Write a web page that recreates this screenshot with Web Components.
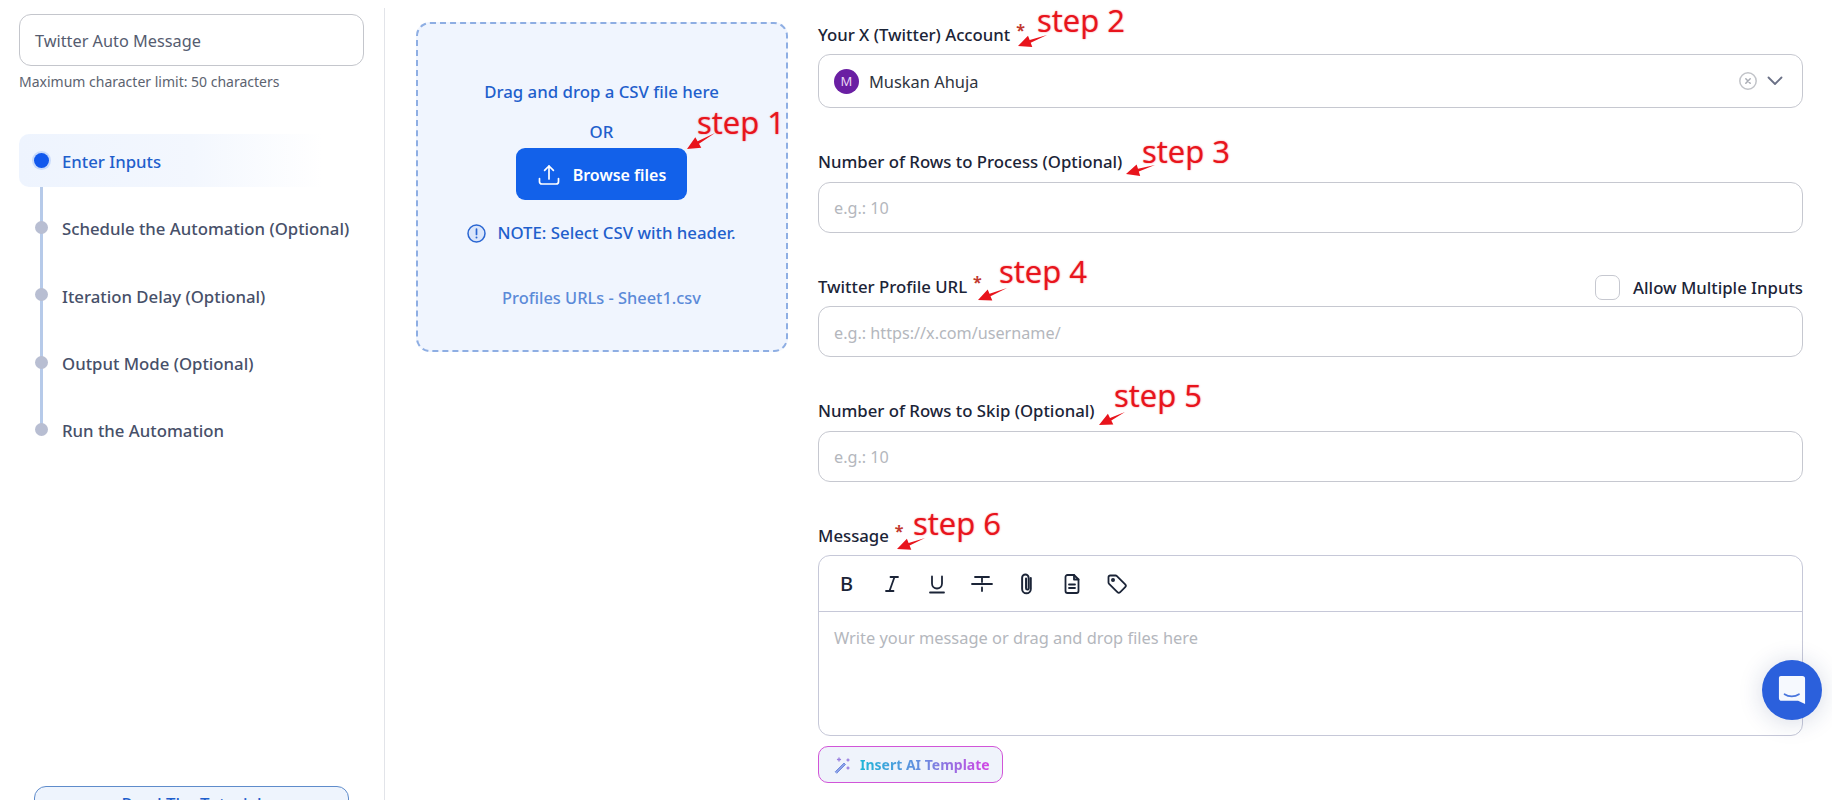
<!DOCTYPE html>
<html lang="en"><head><meta charset="utf-8"><title>Twitter Auto Message</title>
<style>
html,body{margin:0;height:100%;overflow:hidden;background:#fff;font-family:"Noto Sans",sans-serif;font-size:16px;color:#1b2437}
</style></head>
<body>
<app-shell>
  <side-nav slot="side">
    <step-item active>Enter Inputs</step-item>
    <step-item>Schedule the Automation (Optional)</step-item>
    <step-item>Iteration Delay (Optional)</step-item>
    <step-item>Output Mode (Optional)</step-item>
    <step-item>Run the Automation</step-item>
  </side-nav>
  <drop-zone slot="drop"></drop-zone>
  <form-field slot="form" label="Your X (Twitter) Account" required><account-select></account-select></form-field>
  <form-field slot="form" label="Number of Rows to Process (Optional)"><text-box>e.g.: 10</text-box></form-field>
  <form-field slot="form" label="Twitter Profile URL" required><multi-check slot="extra"></multi-check><text-box>e.g.: https://x.com/username/</text-box></form-field>
  <form-field slot="form" label="Number of Rows to Skip (Optional)"><text-box>e.g.: 10</text-box></form-field>
  <form-field slot="form" label="Message" required><rich-editor></rich-editor></form-field>
  <step-note slot="over" n="1" x="697" y="102" ax1="715" ay1="133" ax2="687" ay2="149"></step-note>
  <step-note slot="over" n="2" x="1037" y="0" ax1="1047" ay1="35" ax2="1018" ay2="46"></step-note>
  <step-note slot="over" n="3" x="1142" y="131" ax1="1155" ay1="165" ax2="1126" ay2="174"></step-note>
  <step-note slot="over" n="4" x="999" y="251" ax1="1007" ay1="288" ax2="978" ay2="300"></step-note>
  <step-note slot="over" n="5" x="1114" y="375" ax1="1125" ay1="412" ax2="1099" ay2="425"></step-note>
  <step-note slot="over" n="6" x="913" y="503" ax1="925" ay1="538" ax2="897" ay2="549"></step-note>
  <chat-bubble slot="over"></chat-bubble>
</app-shell>
<script>
function def(name,html,init){
  customElements.define(name,class extends HTMLElement{
    connectedCallback(){
      if(this.shadowRoot)return;
      const r=this.attachShadow({mode:'open'});
      r.innerHTML=typeof html==='function'?html(this):html;
      if(init)init(this,r);
    }
  });
}
const esc=s=>String(s).replace(/&/g,'&amp;').replace(/</g,'&lt;');

def('app-shell',`<style>
:host{display:flex;position:relative;width:1832px;height:800px;overflow:hidden;box-sizing:border-box}
.side{flex:0 0 385px;box-sizing:border-box;margin-top:8px;border-right:1px solid #e2e4e9;height:792px;overflow:hidden}
.drop{flex:0 0 372px;margin:22px 0 0 30.5px}
.form{flex:0 0 985px;margin:23px 0 0 30.5px;display:flex;flex-direction:column;gap:42.5px}
</style>
<div class="side"><slot name="side"></slot></div>
<div class="drop"><slot name="drop"></slot></div>
<div class="form"><slot name="form"></slot></div>
<slot name="over"></slot>`);

def('side-nav',`<style>
:host{display:flex;flex-direction:column;padding:6px 20px 0 19px;box-sizing:border-box;height:822px}
.title{box-sizing:border-box;height:52px;border:1px solid #c4c6cc;border-radius:12px;padding:1px 15px 0;display:flex;align-items:center;color:#555c70;font-size:16.3px}
.help{font-size:14px;color:#5c6370;line-height:20px;margin-top:6px}
nav{margin-top:35px;display:block}
.tut{box-sizing:border-box;margin:auto 0 0 15px;width:315px;height:44px;flex:none;border:1.5px solid #5f8ccb;border-radius:12px;background:#eef4fd;color:#1f5fcc;font-weight:500;font-size:16.8px;text-align:center;line-height:33px}
</style>
<div class="title">Twitter Auto Message</div>
<div class="help">Maximum character limit: 50 characters</div>
<nav><slot></slot></nav>
<div class="tut">Read The Tutorial</div>`);

def('step-item',el=>`<style>
:host{display:flex;align-items:center;position:relative;height:67.3px}
.row{position:relative;z-index:1;display:flex;align-items:center;height:53px;width:100%;border-radius:10px 0 0 10px;color:#475069;font-weight:500;font-size:16.75px;padding-left:43px;box-sizing:border-box;white-space:nowrap}
.dot{position:absolute;left:16px;top:50%;width:13px;height:13px;margin-top:-7px;border-radius:50%;background:#b8bed2;z-index:2}
.line{position:absolute;left:21px;width:3px;top:-50%;height:100%;background:#b6cae9;z-index:0}
.tx{position:relative;top:1px}
:host([active]) .row{background:linear-gradient(90deg,#eef4fe 0%,#f3f7fe 50%,#fff 88%);color:#1f5fcc}
:host([active]) .dot{left:15px;width:15px;height:15px;margin-top:-8px;background:#1259ed;box-shadow:0 0 0 2px #c9dbfb}
:host([active]) .line{display:none}
</style>
<span class="line"></span><div class="row"><span class="dot"></span><span class="tx"><slot></slot></span></div>`);

def('drop-zone',`<style>
:host{display:flex;flex-direction:column;align-items:center;box-sizing:border-box;height:330px;border:2px dashed #8eaee3;border-radius:14px;background:#f0f5fe;color:#1f5fcc;font-weight:500;font-size:16.8px;padding-top:56px}
.t{line-height:24px}
.or{margin-top:16px;line-height:24px}
.btn{margin-top:4px;width:171px;height:52px;box-sizing:border-box;border-radius:9px;background:#1261ea;color:#fff;display:flex;align-items:center;justify-content:center;gap:12px;font-weight:600;font-size:16px;padding-top:1px}
.note{margin-top:21px;display:flex;align-items:center;gap:11px;line-height:24px}
.file{margin-top:41px;line-height:24px;color:#5b8ad8;font-size:16.4px}
svg{display:block}
</style>
<div class="t">Drag and drop a CSV file here</div>
<div class="or">OR</div>
<div class="btn"><svg width="24" height="24" viewBox="0 0 24 24" fill="none" stroke="#fff" stroke-width="1.7" stroke-linecap="round" stroke-linejoin="round"><path d="M2.5 15.5v3.2a2.3 2.3 0 0 0 2.3 2.3h14.4a2.3 2.3 0 0 0 2.3-2.3v-3.2"/><path d="M12 16V3.2"/><path d="M7.6 7.4 12 3l4.400 4.400"/></svg><span>Browse files</span></div>
<div class="note"><svg width="19" height="19" viewBox="0 0 19 19"><circle cx="9.500" cy="9.500" r="8.500" fill="#dbe6fb" stroke="#2a66d2" stroke-width="1.500"/><path d="M9.500 5v5.500" stroke="#2a66d2" stroke-width="1.700" stroke-linecap="round"/><circle cx="9.500" cy="13.500" r="1" fill="#2a66d2"/></svg><span>NOTE: Select CSV with header.</span></div>
<div class="file">Profiles URLs - Sheet1.csv</div>`);

def('form-field',el=>`<style>
:host{display:block}
.head{display:flex;justify-content:space-between;align-items:center;height:24px;margin-bottom:7px;font-weight:500;font-size:16.75px;color:#1b2437;white-space:nowrap}
.star{color:#c2392f;font-size:16px;font-weight:700;margin-left:6px;position:relative;top:-5px}
.lab{position:relative;top:-1px}
</style>
<div class="head"><span class="lab">${esc(el.getAttribute('label'))}${el.hasAttribute('required')?'<span class="star">*</span>':''}</span><slot name="extra"></slot></div>
<slot></slot>`);

def('text-box',`<style>
:host{display:flex;align-items:center;box-sizing:border-box;height:51px;border:1px solid #c6c8d0;border-radius:12px;padding:2px 15px 0;color:#b4b7bd;font-size:16.2px}
</style><slot></slot>`);

def('multi-check',`<style>
:host{display:flex;align-items:center;gap:13px;font-weight:500;color:#1b2437;font-size:16.75px}
.c{width:25px;height:25px;box-sizing:border-box;border:1.500px solid #c6c8d0;border-radius:7px;background:#fff}
</style><span class="c"></span><span>Allow Multiple Inputs</span>`);

def('account-select',`<style>
:host{display:flex;align-items:center;box-sizing:border-box;height:54px;border:1px solid #c6c8d0;border-radius:12px;padding:0 18px 0 15px;color:#2e3440;font-size:16.4px}
.av{width:25px;height:25px;border-radius:50%;background:#6a1fa3;color:#e9d8f5;font-size:13px;display:flex;align-items:center;justify-content:center;margin-right:10px}
.name{flex:1}
svg{display:block}
</style>
<span class="av">M</span><span class="name">Muskan Ahuja</span>
<svg width="20" height="20" viewBox="0 0 20 20" fill="none" stroke="#c2c4c9" stroke-width="1.500" stroke-linecap="round"><circle cx="10" cy="10" r="8.200"/><path d="M7.800 7.800l4.400 4.400M12.200 7.800l-4.400 4.400" stroke="#a9acb4"/></svg>
<svg style="margin-left:8px" width="18" height="18" viewBox="0 0 18 18" fill="none" stroke="#6a7086" stroke-width="1.800" stroke-linecap="round" stroke-linejoin="round"><path d="M2.500 5.500 9 12l6.500-6.500"/></svg>`);

const ic=(inner,w=24)=>`<svg width="${w}" height="${w}" viewBox="0 0 24 24" fill="none" stroke="#1b2437" stroke-width="1.800" stroke-linecap="round" stroke-linejoin="round">${inner}</svg>`;
def('rich-editor',`<style>
:host{display:block}
.box{box-sizing:border-box;height:181px;border:1px solid #c6c8d8;border-radius:12px;display:flex;flex-direction:column}
.bar{height:56px;flex:none;border-bottom:1px solid #c6c8d8;display:flex;align-items:center;padding:0 4px 0 5px;box-sizing:border-box}
.b{width:45px;height:45px;display:flex;align-items:center;justify-content:center}
.bold{font-weight:500;font-size:20px;color:#1b2437;font-family:"Noto Sans",sans-serif}
svg{display:block}
.ph{padding:14px 15px 0;color:#b4b7bd;font-size:16.4px;line-height:24px}
.ai{margin-top:10px;width:185px;height:37px;box-sizing:border-box;border:1.500px solid #d155d8;border-radius:10px;background:#eff3fb;display:flex;align-items:center;padding-left:14px;gap:9px;font-size:14px;font-weight:700}
.ai span{background:linear-gradient(90deg,#1fb6d8 0%,#6d8ae0 50%,#d444e4 100%);-webkit-background-clip:text;background-clip:text;color:transparent}
</style>
<div class="box"><div class="bar">
<span class="b bold">B</span>
<span class="b">${ic('<path d="M10.500 5H18M6 19h7.500M14.500 5 9.500 19"/>')}</span>
<span class="b">${ic('<path d="M7 4.500v7a5 5 0 0 0 10 0v-7"/><path d="M5 20.500h14"/>')}</span>
<span class="b">${ic('<path d="M5 5h14M12 5v5M12 15.500V19M2 12h20"/>')}</span>
<span class="b">${ic('<path d="M15.500 6.500v10a4 4 0 0 1-8 0V6.200a3 3 0 0 1 6 0V16a1.200 1.200 0 0 1-2.400 0V7"/>',26)}</span>
<span class="b">${ic('<path d="M14 3H7.500A2 2 0 0 0 5.500 5v14a2 2 0 0 0 2 2h9a2 2 0 0 0 2-2V7.500z"/><path d="M14 3v4.500h4.500M9 12.500h6M9 16h6"/>')}</span>
<span class="b">${ic('<path d="M3.500 5.200v5.300c0 .5.200 1 .6 1.400l8.300 8.300a2 2 0 0 0 2.800 0l5-5a2 2 0 0 0 0-2.800L11.900 4.100a2 2 0 0 0-1.400-.6H5.200a1.700 1.700 0 0 0-1.700 1.700z"/><circle cx="8" cy="8" r="1.100"/>')}</span>
</div><div class="ph">Write your message or drag and drop files here</div></div>
<div class="ai"><svg width="18" height="18" viewBox="0 0 18 18" fill="none" stroke="#6f8ae0" stroke-width="1.600" stroke-linecap="round"><path d="M2.500 15.500 11 7l1.500 1.500L4 17z" fill="#8ea2e6" stroke-width="1"/><path d="M6 2v3M4.500 3.500h3M15 3v2M14 4h2M15 11v2M14 12h2" stroke="#9a7fe0" stroke-width="1.300"/></svg><span>Insert AI Template</span></div>`);

def('step-note',el=>{
  const a=k=>+el.getAttribute(k), x=a('x'),y=a('y');
  const x1=a('ax1')-x,y1=a('ay1')-y,x2=a('ax2')-x,y2=a('ay2')-y;
  const dx=x1-x2,dy=y1-y2,l=Math.hypot(dx,dy),ux=dx/l,uy=dy/l,nx=-uy,ny=ux;
  const hx=x2+ux*13,hy=y2+uy*13;
  const p=(px,py)=>px.toFixed(1)+','+py.toFixed(1);
  const pts=[p(x2,y2),p(hx+nx*6,hy+ny*6),p(hx+nx*1.400,hy+ny*1.400),p(x1,y1),p(hx-nx*1.400,hy-ny*1.400),p(hx-nx*6,hy-ny*6)].join(' ');
  return `<style>
:host{position:absolute;left:${x}px;top:${y}px;display:block;width:140px;height:60px;pointer-events:none}
.t{position:absolute;left:0;top:0;color:#e8141c;font-family:"Open Sans","Noto Sans",sans-serif;font-size:31px;line-height:40px;font-weight:500;white-space:nowrap;text-shadow:0 0 1.5px rgba(232,20,28,.7)}
svg{position:absolute;left:0;top:0;overflow:visible}
</style><span class="t">step ${esc(el.getAttribute('n'))}</span>
<svg width="1" height="1" viewBox="0 0 1 1"><polygon points="${pts}" fill="#e8141c"/></svg>`;
});

def('chat-bubble',`<style>
:host{position:absolute;left:1762px;top:660px;width:60px;height:60px;border-radius:50%;background:#2b60dc;box-shadow:0 2px 24px rgba(30,50,110,.18);display:flex;align-items:center;justify-content:center}
svg{display:block}
</style><svg width="28" height="30" viewBox="0 0 30 32"><path d="M3 1h23a3 3 0 0 1 3 3v27l-7.500-3.500H4a3 3 0 0 1-3-3V3a2 2 0 0 1 2-2z" fill="#fff" fill-opacity=".96"/><path d="M7 20.500c4.500 3 11 3 15.500 0" fill="none" stroke="#4a76dd" stroke-width="1.800" stroke-linecap="round"/></svg>`);
</script>
</body></html>
